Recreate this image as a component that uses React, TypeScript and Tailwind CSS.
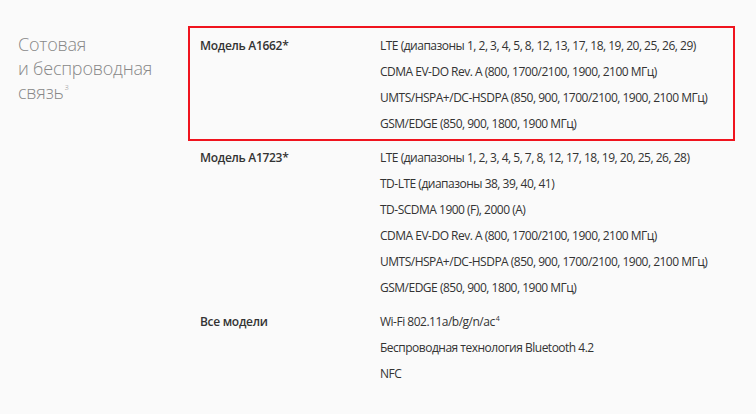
import React from "react";

const groups = [
  {
    model: "Модель A1662*",
    items: [
      "LTE (диапазоны 1, 2, 3, 4, 5, 8, 12, 13, 17, 18, 19, 20, 25, 26, 29)",
      "CDMA EV-DO Rev. A (800, 1700/2100, 1900, 2100 МГц)",
      "UMTS/HSPA+/DC-HSDPA (850, 900, 1700/2100, 1900, 2100 МГц)",
      "GSM/EDGE (850, 900, 1800, 1900 МГц)",
    ],
  },
  {
    model: "Модель A1723*",
    items: [
      "LTE (диапазоны 1, 2, 3, 4, 5, 7, 8, 12, 17, 18, 19, 20, 25, 26, 28)",
      "TD-LTE (диапазоны 38, 39, 40, 41)",
      "TD-SCDMA 1900 (F), 2000 (A)",
      "CDMA EV-DO Rev. A (800, 1700/2100, 1900, 2100 МГц)",
      "UMTS/HSPA+/DC-HSDPA (850, 900, 1700/2100, 1900, 2100 МГц)",
      "GSM/EDGE (850, 900, 1800, 1900 МГц)",
    ],
  },
];

function Group({ model, items }: { model: string; items: React.ReactNode[] }) {
  return (
    <div className="grid grid-cols-[180px_1fr]">
      <div className="font-semibold tracking-[-0.3px] text-[#333]">{model}</div>
      <ul>
        {items.map((t, i) => (
          <li key={i} className="whitespace-nowrap">
            {t}
          </li>
        ))}
      </ul>
    </div>
  );
}

export default function App() {
  return (
    <div className="min-h-[414px] w-[756px] bg-[#fafafa] font-['Open_Sans',sans-serif] text-[12px] leading-[26px] tracking-[-0.5px] text-[#333]">
      <div className="flex">
        <h2 className="w-[188px] shrink-0 pl-[18px] pt-[32px] text-[18px] leading-[24px] font-light tracking-[-0.2px] text-[#888]">
          Сотовая
          <br />и беспроводная
          <br />
          связь<sup className="top-[-9px] ml-px text-[7px]">3</sup>
        </h2>
        <div className="w-[547px] pt-[26px]">
          <div className="border-2 border-[#f0141e] pl-[10px] pt-[5px] pb-[2px]">
            <Group {...groups[0]} />
          </div>
          <div className="pl-[12px] pt-[4px]">
            <Group {...groups[1]} />
          </div>
          <div className="pl-[12px] pt-[8px]">
            <Group
              model="Все модели"
              items={[
                <>
                  Wi-Fi 802.11a/b/g/n/ac
                  <sup className="top-[-5px] ml-px text-[7px]">4</sup>
                </>,
                "Беспроводная технология Bluetooth 4.2",
                "NFC",
              ]}
            />
          </div>
        </div>
      </div>
    </div>
  );
}
